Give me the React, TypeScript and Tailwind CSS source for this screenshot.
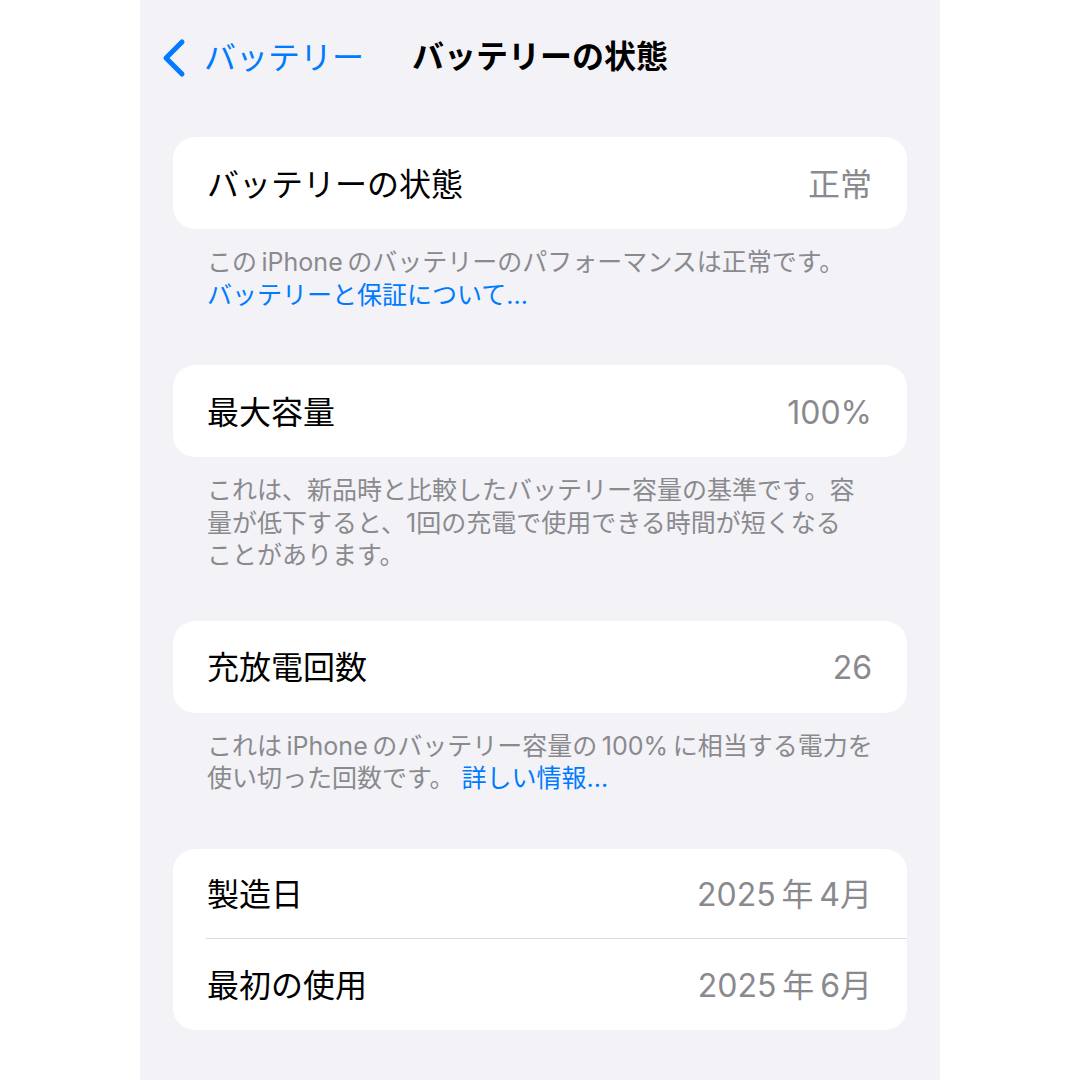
import React from "react";

const font = { fontFamily: '"Inter", "Noto Sans CJK JP", sans-serif' };

function Row({ label, value, h = "h-[92px]" }: { label: string; value: string; h?: string }) {
  return (
    <div className={`flex ${h} items-center justify-between pl-[34px] pr-[35px] pt-[3px]`}>
      <span className="text-[32px] text-black">{label}</span>
      <span className="text-[32px] text-[#8a8a8e]">{value}</span>
    </div>
  );
}

function Card({ children }: { children: React.ReactNode }) {
  return <div className="rounded-[22px] bg-white">{children}</div>;
}

function Desc({ children }: { children: React.ReactNode }) {
  return (
    <div className="mt-[17px] px-[34px] text-[25px] leading-[32.5px] whitespace-nowrap text-[#8a8a8e]">
      {children}
    </div>
  );
}

export default function App() {
  return (
    <div className="flex min-h-[1080px] w-[1080px] justify-center bg-white" style={font}>
      <div className="flex w-[800px] flex-col bg-[#f2f2f7] px-[33px]">
        <div className="relative flex h-[112px] items-center justify-center pt-[2px]">
          <div className="absolute left-[-13px] top-[36px] flex items-center">
            <svg width="30" height="42" viewBox="0 0 30 42" className="mr-[14px]">
              <path
                d="M22 4 L6 20 L22 36"
                fill="none"
                stroke="#007aff"
                strokeWidth="5"
                strokeLinecap="round"
                strokeLinejoin="round"
              />
            </svg>
            <span className="mt-[-2px] text-[32px] text-[#007aff]">バッテリー</span>
          </div>
          <span className="text-[32px] font-bold text-black">バッテリーの状態</span>
        </div>

        <div className="mt-[25px]">
          <Card>
            <Row label="バッテリーの状態" value="正常" />
          </Card>
          <Desc>
            この{"\u2009"}iPhone{"\u2009"}のバッテリーのパフォーマンスは正常です。
            <br />
            <span className="text-[#007aff]">バッテリーと保証について...</span>
          </Desc>
        </div>

        <div className="mt-[54px]">
          <Card>
            <Row label="最大容量" value="100%" />
          </Card>
          <Desc>
            これは、新品時と比較したバッテリー容量の基準です。容
            <br />
            量が低下すると、1回の充電で使用できる時間が短くなる
            <br />
            ことがあります。
          </Desc>
        </div>

        <div className="mt-[49px]">
          <Card>
            <Row label="充放電回数" value="26" />
          </Card>
          <Desc>
            これは{"\u2009"}iPhone{"\u2009"}のバッテリー容量の{"\u2009"}100%{"\u2009"}に相当する電力を
            <br />
            使い切った回数です。 <span className="text-[#007aff]">詳しい情報...</span>
          </Desc>
        </div>

        <div className="mt-[54px]">
          <Card>
            <Row label="製造日" value={"2025\u2009年\u20094月"} h="h-[89px]" />
            <div className="ml-[33px] h-px bg-[#dcdcdf]" />
            <Row label="最初の使用" value={"2025\u2009年\u20096月"} h="h-[91px]" />
          </Card>
        </div>
      </div>
    </div>
  );
}
